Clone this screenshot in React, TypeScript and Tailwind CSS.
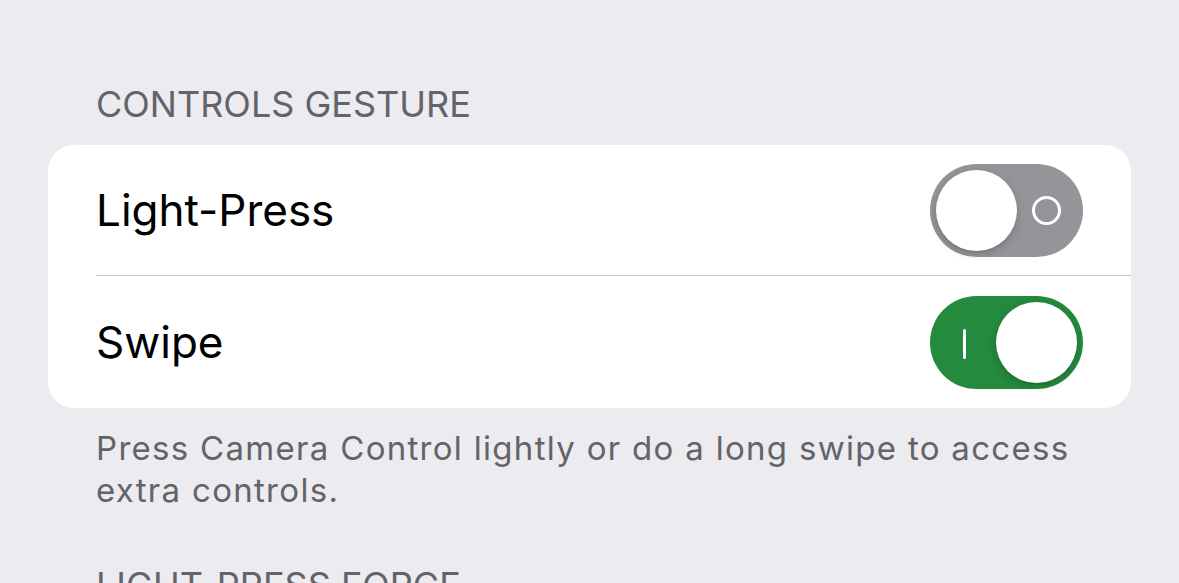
import React from "react";

const font = { fontFamily: "Inter, 'Noto Sans', 'Liberation Sans', sans-serif" };

function Toggle({ on }: { on: boolean }) {
  return (
    <div
      className={`relative flex h-[93px] w-[153px] shrink-0 items-center rounded-full px-[6px] ${
        on ? "justify-end bg-[#248a3d]" : "justify-start bg-[#949499]"
      }`}
    >
      {on ? (
        <div className="absolute left-[33px] top-[33px] h-[30px] w-[3px] rounded-full bg-white" />
      ) : (
        <div className="absolute left-[102px] top-[32px] h-[29px] w-[29px] rounded-full border-[3px] border-white" />
      )}
      <div className="relative h-[81px] w-[81px] rounded-full bg-white shadow-[0_3px_8px_rgba(0,0,0,0.18),0_2px_1px_rgba(0,0,0,0.05)]" />
    </div>
  );
}

export default function App() {
  return (
    <div className="h-[583px] w-[1179px] overflow-hidden bg-[#ebebf0]" style={font}>
      <div className="pt-[82px]">
        <div className="px-[96px] text-[36px] leading-[44px] text-[#636368]">
          CONTROLS GESTURE
        </div>
        <div className="mx-[48px] mt-[19px] overflow-hidden rounded-[26px] bg-white">
          <div className="flex h-[130px] items-center justify-between pl-[48px] pr-[48px]">
            <span className="text-[44px] leading-[54px] text-black">Light-Press</span>
            <Toggle on={false} />
          </div>
          <div className="ml-[48px] h-px bg-[#c6c6c8]" />
          <div className="flex h-[132px] items-center justify-between pl-[48px] pr-[48px]">
            <span className="text-[44px] leading-[54px] text-black">Swipe</span>
            <Toggle on={true} />
          </div>
        </div>
        <div className="mt-[19px] px-[96px] text-[33px] leading-[42px] tracking-[1.3px] text-[#636368]">
          Press Camera Control lightly or do a long swipe to access
          <br />
          extra controls.
        </div>
        <div className="mt-[52px] px-[96px] text-[36px] leading-[44px] text-[#636368]">
          LIGHT-PRESS FORCE
        </div>
      </div>
    </div>
  );
}
